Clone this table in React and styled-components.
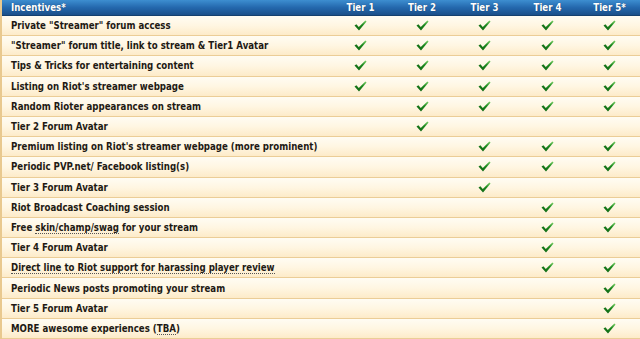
import styled, { createGlobalStyle } from "styled-components";

const GlobalStyle = createGlobalStyle`
  html, body {
    margin: 0;
    padding: 0;
    background: #fff;
  }
  body {
    font-family: "DejaVu Sans Condensed", "DejaVu Sans", Verdana, sans-serif;
  }
`;

const Dotted = styled.span`
  border-bottom: 1px dotted #555;
`;

const Table = styled.div`
  width: 640px;
  height: 339px;
  display: flex;
  flex-direction: column;
  border-left: 2px solid #e9c98f;
  box-sizing: border-box;
  overflow: hidden;
`;

const HeaderRow = styled.div`
  display: grid;
  grid-template-columns: 328px 61px 62px 63px 63px 1fr;
  height: 16px;
  flex: none;
  background: linear-gradient(to bottom, #3d8ed0 0%, #2468ad 50%, #1a4f8a 100%);
  border-bottom: 1px solid #15406e;
  box-sizing: border-box;
  color: #fff;
  font-weight: bold;
  font-size: 9.6px;
  text-shadow: 0 0 1px rgba(0, 0, 0, 0.4);
`;

const HeadLabel = styled.div`
  display: flex;
  align-items: center;
  padding-left: 9px;
`;

const HeadTier = styled.div`
  display: flex;
  align-items: center;
  justify-content: center;
`;

const Row = styled.div`
  display: grid;
  grid-template-columns: 328px 61px 62px 63px 63px 1fr;
  flex: 1;
  background: linear-gradient(to bottom, #fffcf3 0%, #fff6e2 50%, #fdebc9 100%);
  border-bottom: 1px solid #ebcd97;
  box-sizing: border-box;
  color: #1e1a14;
  font-weight: bold;
  font-size: 9.6px;
`;

const Label = styled.div`
  align-self: center;
  padding-left: 9px;
  white-space: nowrap;
`;

const Cell = styled.div`
  display: flex;
  align-items: center;
  justify-content: center;
`;

const tiers = ["Tier 1", "Tier 2", "Tier 3", "Tier 4", "Tier 5*"];

const rows = [
  { label: "Private \"Streamer\" forum access", checks: [1, 2, 3, 4, 5] },
  { label: "\"Streamer\" forum title, link to stream & Tier1 Avatar", checks: [1, 2, 3, 4, 5] },
  { label: "Tips & Tricks for entertaining content", checks: [1, 2, 3, 4, 5] },
  { label: "Listing on Riot's streamer webpage", checks: [1, 2, 3, 4, 5] },
  { label: "Random Rioter appearances on stream", checks: [2, 3, 4, 5] },
  { label: "Tier 2 Forum Avatar", checks: [2] },
  { label: "Premium listing on Riot's streamer webpage (more prominent)", checks: [3, 4, 5] },
  { label: "Periodic PVP.net/ Facebook listing(s)", checks: [3, 4, 5] },
  { label: "Tier 3 Forum Avatar", checks: [3] },
  { label: "Riot Broadcast Coaching session", checks: [4, 5] },
  {
    label: (
      <>
        Free <Dotted>skin/champ/swag</Dotted> for your stream
      </>
    ),
    checks: [4, 5],
  },
  { label: "Tier 4 Forum Avatar", checks: [4] },
  {
    label: <Dotted>Direct line to Riot support for harassing player review</Dotted>,
    checks: [4, 5],
  },
  { label: "Periodic News posts promoting your stream", checks: [5] },
  { label: "Tier 5 Forum Avatar", checks: [5] },
  {
    label: (
      <>
        MORE awesome experiences (<Dotted>TBA</Dotted>)
      </>
    ),
    checks: [5],
  },
];

function Check() {
  return (
    <svg width="13" height="11" viewBox="0 0 13 11">
      <defs>
        <linearGradient id="chk" x1="0" y1="1" x2="1" y2="0">
          <stop offset="0" stopColor="#0e5e12" />
          <stop offset="0.6" stopColor="#1d8a1f" />
          <stop offset="1" stopColor="#7fd46a" />
        </linearGradient>
      </defs>
      <path
        d="M0.5 5.6 L2.4 4.3 L4.8 7 L11.4 0.6 L12.6 1.6 L5 10.4 Z"
        fill="url(#chk)"
      />
    </svg>
  );
}

function App() {
  return (
    <>
      <GlobalStyle />
      <Table>
        <HeaderRow>
          <HeadLabel>Incentives*</HeadLabel>
          {tiers.map((t) => (
            <HeadTier key={t}>{t}</HeadTier>
          ))}
        </HeaderRow>
        {rows.map((row, i) => (
          <Row key={i}>
            <Label>{row.label}</Label>
            {[1, 2, 3, 4, 5].map((n) => (
              <Cell key={n}>{row.checks.includes(n) && <Check />}</Cell>
            ))}
          </Row>
        ))}
      </Table>
    </>
  );
}

export default App;
